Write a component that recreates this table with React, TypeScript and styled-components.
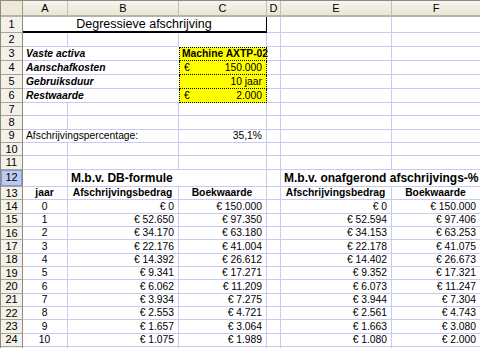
import React from "react";
import styled, { createGlobalStyle, css } from "styled-components";

const GlobalStyle = createGlobalStyle`
  html, body { margin: 0; padding: 0; background: #ffffff; }
  body { font-family: "Liberation Sans", Arial, sans-serif; }
`;

const GRID = "#c9c9f2";

const Sheet = styled.div`
  width: 480px;
  height: 348px;
  overflow: hidden;
  display: grid;
  grid-template-columns: 22px 45px 111px 88px 14px 111px 89px;
  grid-template-rows:
    16px 16px repeat(5, 14px) repeat(5, 13.333px) 17.333px repeat(12, 13.333px)
    13.333px;
  font-family: "Liberation Sans", Arial, sans-serif;
  font-size: 10.3px;
  color: #000;
  box-sizing: border-box;
  border-top: 1px solid #8e8b7c;
  border-left: 1px solid #8e8b7c;
`;

const Corner = styled.div`
  background: #ece9d8;
  border-right: 1px solid #9b9888;
  border-bottom: 2px solid #b8b4a2;
  box-sizing: border-box;
`;

const ColHeader = styled.div`
  background: linear-gradient(#f6f5ef, #e8e5d6);
  border-right: 1px solid #c3bfad;
  border-bottom: 2px solid #b8b4a2;
  box-sizing: border-box;
  display: flex;
  align-items: center;
  justify-content: center;
  font-size: 11px;
  line-height: 1;
`;

const RowHeader = styled.div<{ $selected?: boolean }>`
  background: ${(p) => (p.$selected ? "#bccaf0" : "#f3f2ea")};
  border-right: 1px solid #8e8b7c;
  border-bottom: 1px solid #a9a695;
  box-sizing: border-box;
  display: flex;
  align-items: center;
  justify-content: center;
  font-size: 11px;
  line-height: 1;
  ${(p) =>
    p.$selected &&
    css`
      box-shadow: inset 0 0 0 1px #8796cf;
    `}
`;

type Align = "left" | "center" | "right";

const Cell = styled.div<{
  $align?: Align;
  $span?: number;
  $noRight?: boolean;
  $noBottom?: boolean;
}>`
  box-sizing: border-box;
  min-width: 0;
  grid-column: span ${(p) => p.$span ?? 1};
  border-right: ${(p) => (p.$noRight ? "none" : `1px solid ${GRID}`)};
  border-bottom: ${(p) => (p.$noBottom ? "none" : `1px solid ${GRID}`)};
  display: flex;
  align-items: flex-end;
  justify-content: ${(p) =>
    p.$align === "right" ? "flex-end" : p.$align === "center" ? "center" : "flex-start"};
  padding: 0 4px 0 3px;
  white-space: nowrap;
  line-height: 12px;
  position: relative;
`;

const Title = styled(Cell)`
  border-bottom: 2px solid #000;
  border-right: 1px solid #000;
  font-size: 12.5px;
  line-height: 14px;
  align-items: center;
`;

const Label = styled(Cell)`
  font-weight: bold;
  font-style: italic;
`;

const Input = styled(Cell)<{ $first?: boolean }>`
  background: #ffff00;
  border: 1px dotted #000;
  border-top: ${(p) => (p.$first ? "1px dotted #000" : "none")};
  justify-content: space-between;
  padding: 0 4px 0 4px;
  z-index: 1;
`;

const InputStrong = styled(Input)`
  font-weight: bold;
  justify-content: flex-start;
  padding-left: 2px;
  overflow: visible;
`;

const Heading = styled(Cell)`
  font-weight: bold;
  font-size: 12px;
  line-height: 13px;
  padding-bottom: 1px;
`;

const ColTitle = styled(Cell)`
  font-weight: bold;
  justify-content: center;
`;

const b = ["€ 0", "€ 52.650", "€ 34.170", "€ 22.176", "€ 14.392", "€ 9.341", "€ 6.062", "€ 3.934", "€ 2.553", "€ 1.657", "€ 1.075"];
const c = ["€ 150.000", "€ 97.350", "€ 63.180", "€ 41.004", "€ 26.612", "€ 17.271", "€ 11.209", "€ 7.275", "€ 4.721", "€ 3.064", "€ 1.989"];
const e = ["€ 0", "€ 52.594", "€ 34.153", "€ 22.178", "€ 14.402", "€ 9.352", "€ 6.073", "€ 3.944", "€ 2.561", "€ 1.663", "€ 1.080"];
const f = ["€ 150.000", "€ 97.406", "€ 63.253", "€ 41.075", "€ 26.673", "€ 17.321", "€ 11.247", "€ 7.304", "€ 4.743", "€ 3.080", "€ 2.000"];

const Empty = ({ n = 1 }: { n?: number }) => (
  <>
    {Array.from({ length: n }).map((_, i) => (
      <Cell key={i} />
    ))}
  </>
);

export default function App() {
  return (
    <>
      <GlobalStyle />
      <Sheet>
        <Corner />
        {["A", "B", "C", "D", "E", "F"].map((l) => (
          <ColHeader key={l}>{l}</ColHeader>
        ))}

        <RowHeader>1</RowHeader>
        <Title $span={3} $align="center">Degressieve afschrijving</Title>
        <Empty n={3} />

        <RowHeader>2</RowHeader>
        <Cell />
        <Cell />
        <Cell $noBottom />
        <Empty n={3} />

        <RowHeader>3</RowHeader>
        <Label $span={2} $noRight>Vaste activa</Label>
        <InputStrong $first>Machine AXTP-02</InputStrong>
        <Empty n={3} />

        <RowHeader>4</RowHeader>
        <Label $span={2} $noRight>Aanschafkosten</Label>
        <Input>
          <span>€</span>
          <span>150.000</span>
        </Input>
        <Empty n={3} />

        <RowHeader>5</RowHeader>
        <Label $span={2} $noRight>Gebruiksduur</Label>
        <Input>
          <span></span>
          <span>10 jaar</span>
        </Input>
        <Empty n={3} />

        <RowHeader>6</RowHeader>
        <Label $span={2} $noRight>Restwaarde</Label>
        <Input>
          <span>€</span>
          <span>2.000</span>
        </Input>
        <Empty n={3} />

        <RowHeader>7</RowHeader>
        <Empty n={6} />
        <RowHeader>8</RowHeader>
        <Empty n={6} />

        <RowHeader>9</RowHeader>
        <Cell $span={2}>Afschrijvingspercentage:</Cell>
        <Cell $align="right">35,1%</Cell>
        <Empty n={3} />

        <RowHeader>10</RowHeader>
        <Empty n={6} />
        <RowHeader>11</RowHeader>
        <Empty n={6} />

        <RowHeader $selected>12</RowHeader>
        <Cell />
        <Heading $span={2}>M.b.v. DB-formule</Heading>
        <Cell />
        <Heading $span={2}>M.b.v. onafgerond afschrijvings-%</Heading>

        <RowHeader>13</RowHeader>
        <ColTitle>jaar</ColTitle>
        <ColTitle>Afschrijvingsbedrag</ColTitle>
        <ColTitle>Boekwaarde</ColTitle>
        <Cell />
        <ColTitle>Afschrijvingsbedrag</ColTitle>
        <ColTitle>Boekwaarde</ColTitle>

        {b.map((_, i) => (
          <React.Fragment key={i}>
            <RowHeader>{14 + i}</RowHeader>
            <Cell $align="center">{i}</Cell>
            <Cell $align="right">{b[i]}</Cell>
            <Cell $align="right">{c[i]}</Cell>
            <Cell />
            <Cell $align="right">{e[i]}</Cell>
            <Cell $align="right">{f[i]}</Cell>
          </React.Fragment>
        ))}

        <RowHeader />
        <Empty n={6} />
      </Sheet>
    </>
  );
}
